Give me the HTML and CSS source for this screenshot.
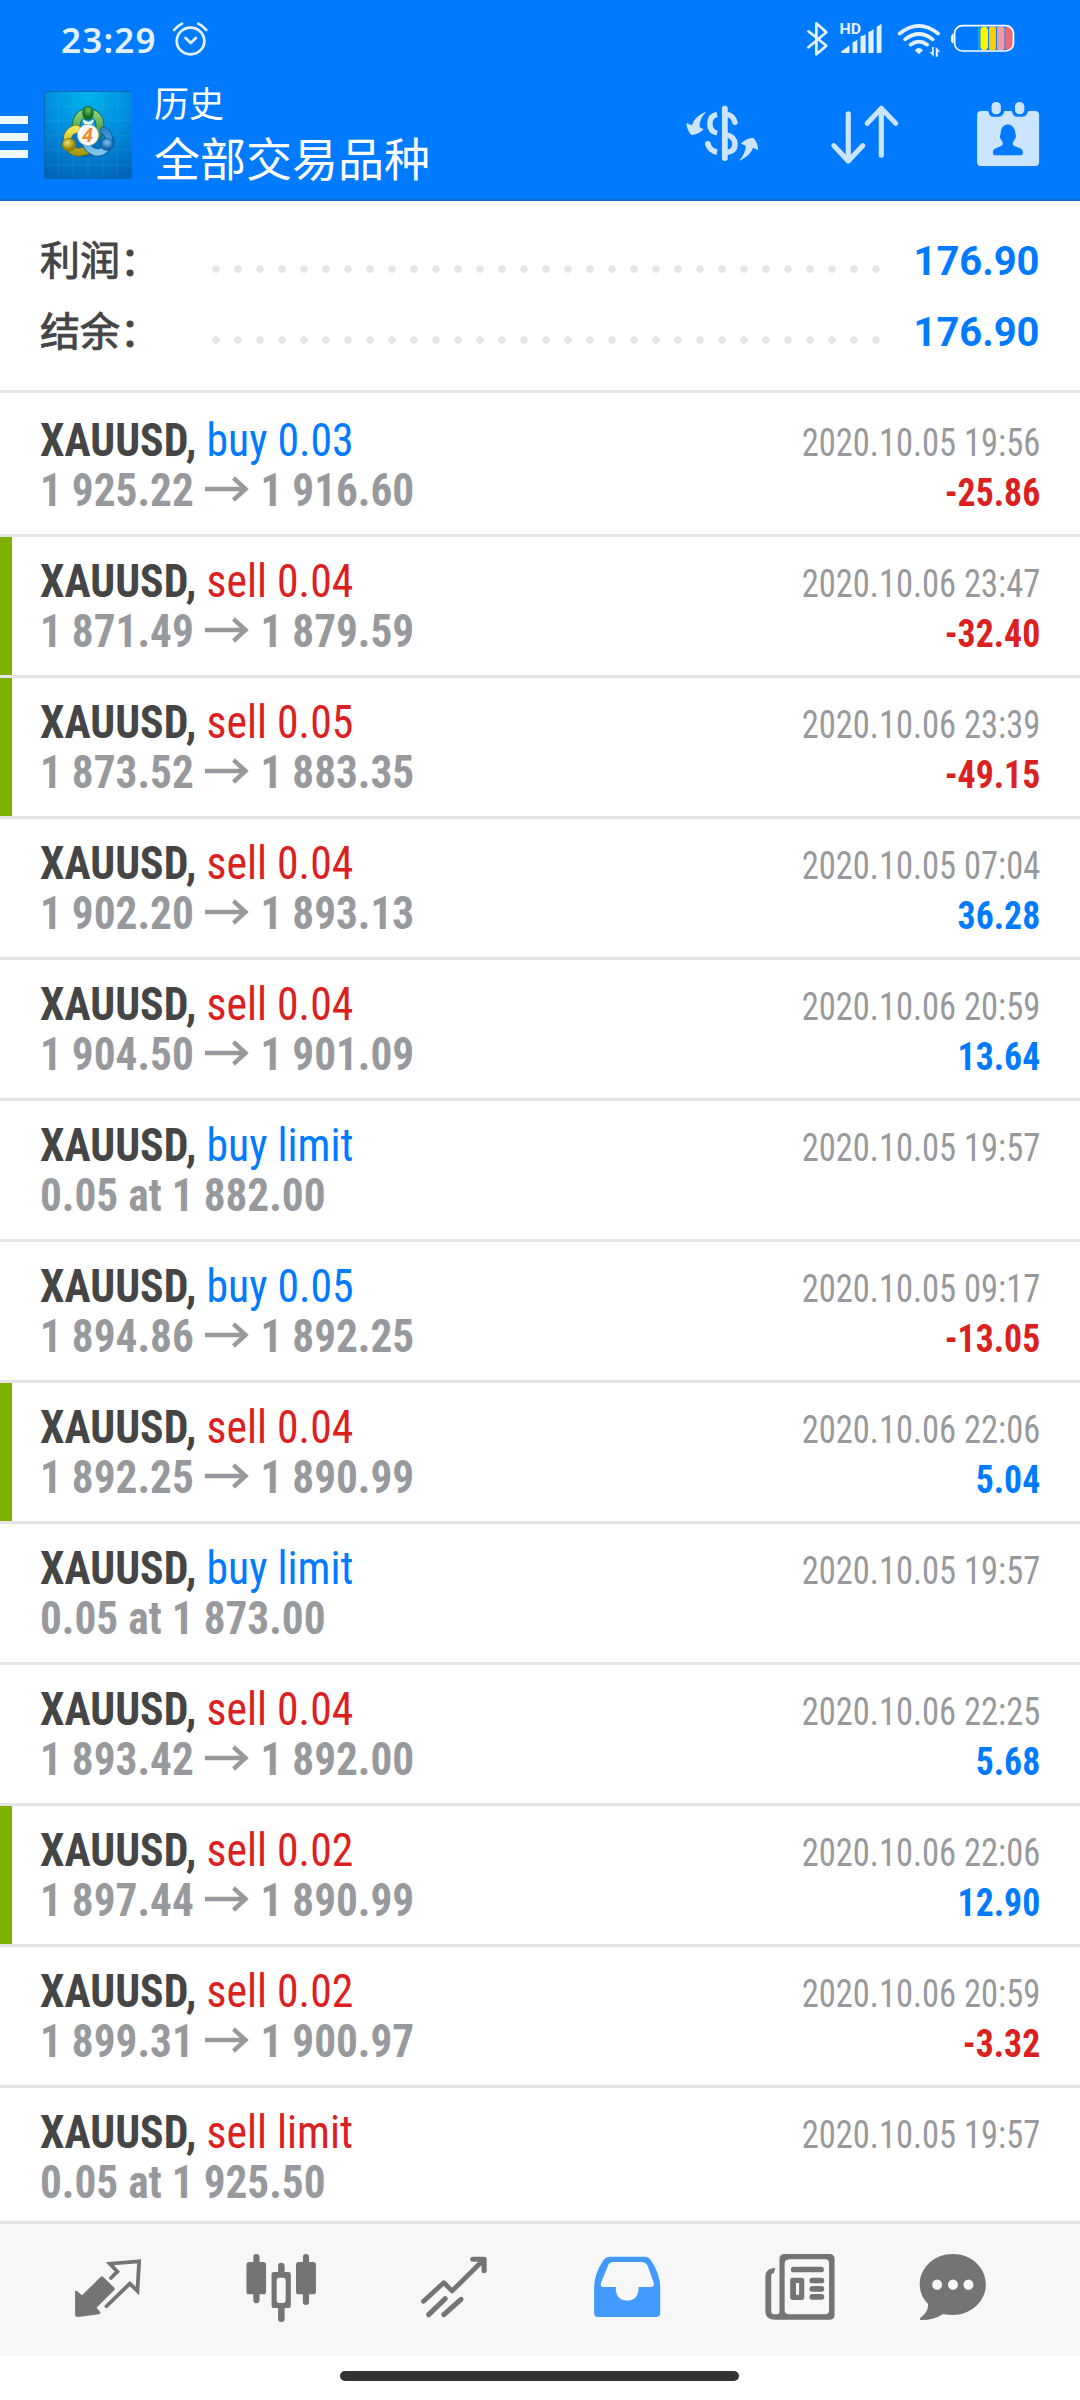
FILE: index.html
```html
<!DOCTYPE html>
<html lang="zh-CN">
<head>
<meta charset="utf-8">
<title>历史</title>
<link rel="stylesheet" href="styles.css">
</head>
<body>
<svg class="defs" width="0" height="0">
  <symbol id="arrow" viewBox="0 0 48 26" preserveAspectRatio="none"><path d="M0 13H44M31 2L44 13L31 24" fill="none" stroke="#98999d" stroke-width="4.6"/></symbol>
</svg>
<header class="header">
  <div class="status">
    <div class="status-left">
      <span class="clock">23:29</span>
      <svg width="38" height="38" viewBox="498 60 110 114" preserveAspectRatio="none" fill="none" stroke="#e3f1ff" stroke-width="8" stroke-linecap="round" stroke-linejoin="round"><circle cx="554.500" cy="123" r="40"/><path d="M507 90Q516 78 530 71M600 90Q591 78 577 71M540 114L555 129L570 114"/></svg>
    </div>
    <div class="status-right">
      <svg width="30.300" height="38" viewBox="770 60 88 114" preserveAspectRatio="none" fill="none" stroke="#e3f1ff" stroke-width="8" stroke-linecap="round" stroke-linejoin="round"><path d="M780 94L832 137L803 163V70L832 97L780 142"/></svg>
      <svg width="55.800" height="38" viewBox="858 60 162 114" preserveAspectRatio="none" fill="#e3f1ff"><text class="hd" x="871" y="102">HD</text><path d="M877 159V153Q888 147 900 136V157Q900 159 898 159ZM909 157V127Q915 126 923 119V157Q923 159 921 159H911Q909 159 909 157ZM932 157V109Q940 109 947 103V157Q947 159 945 159H934Q932 159 932 157ZM955 157V96Q963 94 970 87V157Q970 159 968 159H957Q955 159 955 157ZM979 157V80Q986 77 993 71V157Q993 159 991 159H981Q979 159 979 157Z"/></svg>
      <svg width="55.100" height="38" viewBox="1020 60 160 114" preserveAspectRatio="none"><g fill="none" stroke="#e3f1ff" stroke-width="11" stroke-linecap="round"><path d="M1045 101Q1101 54 1157 101M1061 118Q1101 86 1141 118M1077 134Q1101 116 1125 134"/></g><path d="M1089 151Q1101 137 1113 151L1101 163Z" fill="#e3f1ff"/><path d="M1132 156H1139V141H1144V170ZM1150 170V141L1163 155H1156V170Z" fill="#e3f1ff"/></svg>
      <svg width="72.300" height="38" viewBox="1180 60 210 114" preserveAspectRatio="none"><path d="M1202 101H1199Q1194 106 1194 116T1199 130H1202Z" fill="#fff"/><path d="M1273 80H1278V150H1273Z" fill="#00b4e8"/><path d="M1286 80H1296Q1302 84 1302 90V140Q1302 146 1296 150H1286Q1280 146 1280 140V90Q1280 84 1286 80Z" fill="#fff600"/><rect x="1305" y="80" width="20" height="70" rx="5" fill="#fc0"/><rect x="1328" y="80" width="22" height="70" rx="5" fill="#f09aa2"/><path d="M1352 86Q1354 80 1358 80Q1374 80 1374 97V133Q1374 150 1358 150Q1354 150 1352 144Z" fill="#ed6a74"/><rect x="1205" y="77" width="171" height="76" rx="23" fill="none" stroke="#fff" stroke-width="5"/></svg>
    </div>
  </div>
  <div class="toolbar">
    <div class="menu"><i></i><i></i><i></i></div>
    <svg class="logo" width="88" height="88" viewBox="43 34 264 264">
      <defs>
        <radialGradient id="sky" cx=".5" cy=".05" r="1"><stop offset="0" stop-color="#00b4ec"/><stop offset=".45" stop-color="#0090e0"/><stop offset="1" stop-color="#0064b8"/></radialGradient>
        <linearGradient id="gr" x2="0" y2="1"><stop offset="0" stop-color="#8ccf7a"/><stop offset="1" stop-color="#2c8c2e"/></linearGradient>
        <linearGradient id="ye" x2="0" y2="1"><stop offset="0" stop-color="#f1e658"/><stop offset="1" stop-color="#a89a10"/></linearGradient>
        <linearGradient id="bl" x2="0" y2="1"><stop offset="0" stop-color="#2b86c9"/><stop offset="1" stop-color="#7cc6ef"/></linearGradient>
        <radialGradient id="gb" cy=".3"><stop offset="0" stop-color="#74c267"/><stop offset="1" stop-color="#12701d"/></radialGradient>
        <radialGradient id="yb" cx=".4" cy=".35"><stop offset="0" stop-color="#f0e770"/><stop offset="1" stop-color="#968405"/></radialGradient>
        <radialGradient id="bb" cy=".35"><stop offset="0" stop-color="#7fc4ee"/><stop offset="1" stop-color="#1669ae"/></radialGradient>
      </defs>
      <path fill="url(#sky)" d="M43 34H307V298H43Z"/>
      <path d="M86 34V298M130 34V298M175 34V298M219 34V298M263 34V298M43 79H307M43 123H307M43 167H307M43 211H307M43 255H307" stroke="#5cc8f4" stroke-opacity=".22" stroke-width="2"/>
      <path d="M44 298V35H307" fill="none" stroke="#0762b4" stroke-width="3"/>
      <ellipse cx="176" cy="186" rx="80" ry="48" fill="#003f80" opacity=".25"/>
      <g stroke-linecap="round" fill="none">
        <path d="M139 142C140 110 156 99 176 99S212 114 211 142Q208 166 192 178" stroke="#175f29" stroke-width="25"/>
        <path d="M139 142C140 110 156 99 176 99S212 114 211 142Q208 166 192 178" stroke="url(#gr)" stroke-width="21"/>
        <path d="M141 148C118 152 110 169 114 190Q122 217 148 218L170 213" stroke="#776d12" stroke-width="25"/>
        <path d="M141 148C118 152 110 169 114 190Q122 217 148 218L170 213" stroke="url(#ye)" stroke-width="21"/>
        <path d="M222 153Q237 159 237 181C235 209 216 223 195 217Q174 208 170 194" stroke="#0f4d85" stroke-width="24"/>
        <path d="M222 153Q237 159 237 181C235 209 216 223 195 217Q174 208 170 194" stroke="url(#bl)" stroke-width="20"/>
      </g>
      <path d="M158 119L176 127L194 119L187 134H164Z" fill="#f2faf0"/>
      <ellipse cx="175" cy="100" rx="16" ry="21" fill="url(#gb)" stroke="#175f29" stroke-width="2"/>
      <ellipse cx="118" cy="195" rx="21" ry="19" fill="url(#yb)" stroke="#776d12" stroke-width="2"/>
      <ellipse cx="232" cy="194" rx="20" ry="18" fill="url(#bb)" stroke="#0f4d85" stroke-width="2"/>
      <circle cx="175" cy="166" r="32" fill="#fafafa" stroke="#9a8" stroke-width="2"/>
      <text class="logo-four" x="174" y="187" text-anchor="middle">4</text>
    </svg>
    <div class="titles"><div class="title-small">历史</div><div class="title-large">全部交易品种</div></div>
    <div class="actions">
      <svg width="79.200" height="68" viewBox="415 300 230 204" preserveAspectRatio="none" fill="#cce5ff"><rect x="528" y="317" width="17" height="166" rx="8"/><g fill="none" stroke="#cce5ff" stroke-width="16"><path d="M514 343Q493 347 493 371T514 399"/><path d="M487 431Q492 453 514 456"/><path d="M540 342Q561 346 566 367M540 404Q566 410 566 433T540 457" stroke-linecap="round"/></g><circle cx="487" cy="431" r="8"/><path d="M482 336C463 342 448 354 441 376L425 369Q425 388 439 405Q460 404 475 388L463 381Q462 357 482 336ZM578 482C598 474 614 459 618 443L633 450Q633 430 620 414Q599 413 583 431L597 437Q598 458 578 482Z"/></svg>
      <svg width="72.300" height="68" viewBox="840 300 210 204" preserveAspectRatio="none" fill="none" stroke="#cce5ff" stroke-width="15" stroke-linecap="round" stroke-linejoin="round"><path d="M896 341V483M854 437L896 483L938 437M992 466V325M951 370L992 325L1034 370"/></svg>
      <svg width="68.900" height="68" viewBox="1260 300 200 204" preserveAspectRatio="none" fill="#cce5ff"><rect x="1311" y="306" width="27" height="37" rx="13"/><rect x="1379" y="306" width="27" height="37" rx="13"/><path fill-rule="evenodd" d="M1280 333H1298Q1303 333 1303 338Q1305 350 1316 350H1333Q1345 349 1348 333H1370Q1372 350 1384 350H1402Q1413 349 1416 336Q1417 333 1421 333H1438Q1449 334 1449 345V487Q1449 498 1438 498H1280Q1269 498 1269 487V345Q1269 334 1280 333ZM1358 373Q1336 376 1337 405Q1333 407 1336 414Q1339 420 1341 422Q1347 434 1339 438L1320 446Q1314 450 1315 460Q1315 466 1320 466H1397Q1402 466 1402 460Q1402 449 1397 446L1377 438Q1368 434 1376 422L1381 413Q1383 407 1381 404Q1380 376 1358 373Z"/></svg>
    </div>
  </div>
</header>
<main>
  <section class="summary">
    <div class="sum-row"><span class="sum-label">利润：</span><span class="dots"></span><span class="sum-value">176.90</span></div>
    <div class="sum-row"><span class="sum-label">结余：</span><span class="dots"></span><span class="sum-value">176.90</span></div>
  </section>
  <section class="deals">
    <div class="deal"><div class="info"><div><b>XAUUSD,</b> <span class="buy">buy 0.03</span></div><div class="price">1 925.22<svg class="arrow"><use href="#arrow"/></svg>1 916.60</div></div><div class="side"><div class="time">2020.10.05 19:56</div><div class="profit sell">-25.86</div></div></div>
    <div class="deal marked"><div class="info"><div><b>XAUUSD,</b> <span class="sell">sell 0.04</span></div><div class="price">1 871.49<svg class="arrow"><use href="#arrow"/></svg>1 879.59</div></div><div class="side"><div class="time">2020.10.06 23:47</div><div class="profit sell">-32.40</div></div></div>
    <div class="deal marked"><div class="info"><div><b>XAUUSD,</b> <span class="sell">sell 0.05</span></div><div class="price">1 873.52<svg class="arrow"><use href="#arrow"/></svg>1 883.35</div></div><div class="side"><div class="time">2020.10.06 23:39</div><div class="profit sell">-49.15</div></div></div>
    <div class="deal"><div class="info"><div><b>XAUUSD,</b> <span class="sell">sell 0.04</span></div><div class="price">1 902.20<svg class="arrow"><use href="#arrow"/></svg>1 893.13</div></div><div class="side"><div class="time">2020.10.05 07:04</div><div class="profit buy">36.28</div></div></div>
    <div class="deal"><div class="info"><div><b>XAUUSD,</b> <span class="sell">sell 0.04</span></div><div class="price">1 904.50<svg class="arrow"><use href="#arrow"/></svg>1 901.09</div></div><div class="side"><div class="time">2020.10.06 20:59</div><div class="profit buy">13.64</div></div></div>
    <div class="deal"><div class="info"><div><b>XAUUSD,</b> <span class="buy">buy limit</span></div><div class="price">0.05 at 1 882.00</div></div><div class="side"><div class="time">2020.10.05 19:57</div></div></div>
    <div class="deal"><div class="info"><div><b>XAUUSD,</b> <span class="buy">buy 0.05</span></div><div class="price">1 894.86<svg class="arrow"><use href="#arrow"/></svg>1 892.25</div></div><div class="side"><div class="time">2020.10.05 09:17</div><div class="profit sell">-13.05</div></div></div>
    <div class="deal marked"><div class="info"><div><b>XAUUSD,</b> <span class="sell">sell 0.04</span></div><div class="price">1 892.25<svg class="arrow"><use href="#arrow"/></svg>1 890.99</div></div><div class="side"><div class="time">2020.10.06 22:06</div><div class="profit buy">5.04</div></div></div>
    <div class="deal"><div class="info"><div><b>XAUUSD,</b> <span class="buy">buy limit</span></div><div class="price">0.05 at 1 873.00</div></div><div class="side"><div class="time">2020.10.05 19:57</div></div></div>
    <div class="deal"><div class="info"><div><b>XAUUSD,</b> <span class="sell">sell 0.04</span></div><div class="price">1 893.42<svg class="arrow"><use href="#arrow"/></svg>1 892.00</div></div><div class="side"><div class="time">2020.10.06 22:25</div><div class="profit buy">5.68</div></div></div>
    <div class="deal marked"><div class="info"><div><b>XAUUSD,</b> <span class="sell">sell 0.02</span></div><div class="price">1 897.44<svg class="arrow"><use href="#arrow"/></svg>1 890.99</div></div><div class="side"><div class="time">2020.10.06 22:06</div><div class="profit buy">12.90</div></div></div>
    <div class="deal"><div class="info"><div><b>XAUUSD,</b> <span class="sell">sell 0.02</span></div><div class="price">1 899.31<svg class="arrow"><use href="#arrow"/></svg>1 900.97</div></div><div class="side"><div class="time">2020.10.06 20:59</div><div class="profit sell">-3.32</div></div></div>
    <div class="deal"><div class="info"><div><b>XAUUSD,</b> <span class="sell">sell limit</span></div><div class="price">0.05 at 1 925.50</div></div><div class="side"><div class="time">2020.10.05 19:57</div></div></div>
  </section>
</main>
<nav class="tabs">
  <svg width="72.300" height="73.300" viewBox="210 150 210 220" preserveAspectRatio="none" fill="#747474"><path d="M219 274Q221 270 225 274L239 286L293 231Q297 227 301 231L333 263Q336 267 333 270L281 323L292 336Q294 341 288 343L228 351Q219 352 219 344Z"/><path d="M323 234L342 215L320 191L405 184L400 273L378 251L310 319" fill="none" stroke="#747474" stroke-width="11" stroke-linecap="round"/></svg>
  <svg width="76.400" height="73.300" viewBox="705 150 222 220" preserveAspectRatio="none" fill="#747474"><rect x="715" y="186" width="57" height="97" rx="8"/><rect x="735" y="162" width="18" height="148" rx="9"/><rect x="859" y="186" width="58" height="97" rx="8"/><rect x="879" y="162" width="18" height="153" rx="9"/><path d="M807 216V198Q807 188 816 188T826 198V216H837Q844 216 844 223V317Q844 324 837 324H826V356Q826 366 816 366T807 356V324H796Q788 324 788 317V223Q788 216 796 216ZM810 233Q803 233 803 241V301Q803 309 810 309H823Q829 309 829 301V241Q829 233 823 233Z" fill-rule="evenodd"/></svg>
  <svg width="72.300" height="73.300" viewBox="1214 150 210 220" preserveAspectRatio="none" fill="none" stroke="#747474" stroke-width="14" stroke-linecap="round" stroke-linejoin="round"><path d="M1230 304L1289 248L1313 273L1404 180"/><path d="M1373 178H1406V212" stroke-width="15"/><path d="M1245 344L1293 296M1289 344L1339 298" stroke-width="15"/></svg>
  <svg width="72.300" height="73.300" viewBox="149 150 210 220" preserveAspectRatio="none"><path fill="#429aff" fill-rule="evenodd" d="M203 170H307Q316 170 322 179Q350 221 350 262V339Q350 351 338 351H170Q158 351 158 339V262Q158 221 186 179Q193 170 203 170ZM215 186Q203 186 199 195L178 248Q175 261 185 261H221V267Q222 286 231 294Q240 302 254 302T277 294Q286 286 287 267V261H323Q334 261 331 248L314 199Q309 187 298 186Z"/></svg>
  <svg width="74" height="73.300" viewBox="653 150 215 220" preserveAspectRatio="none" fill="#747474"><path fill-rule="evenodd" d="M714 162H843Q858 162 858 177V344Q858 359 843 359H683Q657 359 657 334V229Q658 204 686 204L682 219Q674 220 674 229V334Q674 343 683 343H691Q698 343 698 334V177Q698 162 714 162ZM726 178Q713 179 713 191V330Q713 343 726 343H831Q842 343 842 330V191Q842 178 831 178ZM737 233H762Q770 233 770 241V292Q770 300 762 300H737Q729 300 729 292V241Q729 233 737 233ZM746 249V284H755V249Z"/><rect x="731" y="200" width="96" height="17" rx="8"/><rect x="785" y="233" width="43" height="17" rx="8"/><rect x="785" y="258" width="43" height="17" rx="8"/><rect x="785" y="282" width="43" height="17" rx="8"/></svg>
  <svg width="71.600" height="73.300" viewBox="1095 150 208 220" preserveAspectRatio="none" fill="#747474"><path fill-rule="evenodd" d="M1199 162C1252 162 1295 202 1295 253S1252 345 1199 345Q1184 345 1171 342Q1142 361 1106 360Q1102 358 1105 353Q1129 335 1127 312Q1103 287 1103 253C1103 202 1146 162 1199 162ZM1139 254A14.500 15.500 0 1 0 1168 254A14.500 15.500 0 1 0 1139 254ZM1185 254A14.500 15.500 0 1 0 1214 254A14.500 15.500 0 1 0 1185 254ZM1230 254A14.500 15.500 0 1 0 1259 254A14.500 15.500 0 1 0 1230 254Z"/></svg>
</nav>
<footer class="gesture"><div class="handle"></div></footer>
</body>
</html>
```
FILE: styles.css
```css
* { box-sizing: border-box; }
body {
  margin: 0;
  width: 1080px;
  height: 2400px;
  display: flex;
  flex-direction: column;
  overflow: hidden;
  background: #fff;
  font-family: Roboto, "Noto Sans CJK SC", sans-serif;
  color: #454545;
}
svg { display: block; flex: none; }
.defs { position: absolute; }

.header { height: 201px; background: #007aff; border-bottom: 2px solid #0f6bd0; color: #fff; }
.status { height: 80px; padding: 20px 62px 0 61px; display: flex; justify-content: space-between; }
.status-left, .status-right { display: flex; }
.status-left { gap: 14px; }
.clock { width: 96px; font: 650 35px/40px "Noto Sans", sans-serif; letter-spacing: 1.2px; color: #e3f1ff; white-space: nowrap; }
.hd { font: 700 46px Roboto, sans-serif; }
.toolbar { height: 119px; display: flex; align-items: flex-start; }
.menu { width: 28px; padding-top: 36px; margin-right: 16px; display: flex; flex-direction: column; gap: 9px; }
.menu i { height: 8px; background: #eff7ff; }
.logo { margin-top: 11px; }
.logo-four { font: italic 700 60px Roboto, sans-serif; fill: #f08a2c; }
.titles { margin-left: 22px; font-family: "Noto Sans CJK SC", sans-serif; white-space: nowrap; }
.title-small { font-size: 35px; line-height: 44px; }
.title-large { font-size: 46px; line-height: 64px; }
.actions { margin-left: auto; margin-right: 37px; padding-top: 20px; display: flex; gap: 67px; }
.actions svg:last-child { margin-left: 6px; }

.summary { height: 192px; padding: 24px 40px 0; border-bottom: 3px solid #e5e5e5; }
.sum-row { height: 71px; display: flex; align-items: center; }
.sum-label { width: 165px; margin-top: -5px; font: 400 40px/71px "Noto Sans CJK SC", sans-serif; -webkit-text-stroke: .9px #454545; }
.dots { width: 682px; height: 8px; margin-top: 16px; background: radial-gradient(circle at 11px 4px, #e5e5e5 3.4px, transparent 4.1px) 0 0 / 22px 8px repeat-x; }
.sum-value { margin-left: auto; margin-top: 2px; font: 700 41px/71px Roboto, sans-serif; color: #007aff; transform: scaleX(.973); transform-origin: right; }

.deal { height: 141px; padding: 19px 40px 0; border-bottom: 3px solid #e5e5e5; display: flex; justify-content: space-between; font-stretch: condensed; }
.deal:first-child { height: 144px; padding-top: 22px; }
.deal:last-child { height: 133px; border-bottom: 0; }
.marked { background: linear-gradient(#80b000, #80b000) 0 0 / 12px 100% no-repeat; }
/* The list uses a face narrower than the condensed cut */
.info { font-size: 46.750px; line-height: 50px; white-space: nowrap; transform: scaleX(.935); transform-origin: left; }
.price { display: flex; font-weight: 700; color: #98999d; transform: scaleX(.99); transform-origin: left; }
.arrow { width: 48px; height: 26px; margin: 11px 12px 0; }
.side { padding-top: 3px; font-size: 38.500px; line-height: 50px; text-align: right; color: #98999d; white-space: nowrap; }
.time { font-weight: 430; transform: scaleX(.896); transform-origin: right; }
.profit { font-weight: 700; transform: scaleX(.928); transform-origin: right; }
.profit.buy, .buy { color: #007aff; }
.profit.sell, .sell { color: #dc2020; }

.tabs { height: 135px; padding: 26px 0 0 22px; border-top: 3px solid #e5e5e5; background: #f7f7f7; display: grid; grid-template-columns: repeat(5, 173px) 132px; justify-items: center; align-items: start; }
.gesture { height: 44px; padding: 15px 1px 0 0; display: flex; justify-content: center; align-items: flex-start; }
.handle { width: 399px; height: 10px; border-radius: 5px; background: #333; }
```
